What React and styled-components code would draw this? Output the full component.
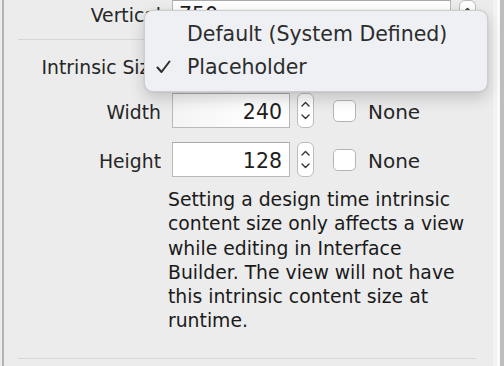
import React from "react";
import styled, { createGlobalStyle } from "styled-components";

const GlobalStyle = createGlobalStyle`
  html, body {
    margin: 0;
    padding: 0;
    background: #ececec;
    overflow: hidden;
  }
  body {
    font-family: "DejaVu Sans", Inter, "Liberation Sans", sans-serif;
    -webkit-font-smoothing: antialiased;
  }
`;

const Window = styled.div`
  position: relative;
  display: flex;
  width: 504px;
  height: 366px;
  overflow: hidden;
  background: #ececec;
`;

const Panel = styled.div`
  flex: 1;
  margin-left: 2px;
  border-left: 2px solid #b2b2b2;
  display: flex;
  flex-direction: column;
`;

const ScrollEdge = styled.div`
  width: 11px;
  display: flex;
`;

const Strip = styled.div`
  width: ${({ $w }) => $w}px;
  background: ${({ $c }) => $c};
`;

const Row = styled.div`
  display: grid;
  grid-template-columns: 157px 1fr;
  column-gap: 11px;
  align-items: center;
  height: ${({ $h }) => $h}px;
  margin-top: ${({ $mt }) => $mt || 0}px;
`;

const Label = styled.div`
  text-align: right;
  font-size: 18.8px;
  color: #262626;
  white-space: nowrap;
  overflow: hidden;
  padding-top: ${({ $drop }) => $drop || 0}px;
`;

const Controls = styled.div`
  display: flex;
  align-items: center;
  height: 100%;
`;

const Separator = styled.div`
  height: 1px;
  background: #d6d6d6;
  margin: ${({ $m }) => $m};
`;

const Field = styled.div`
  box-sizing: border-box;
  width: ${({ $w }) => $w}px;
  height: 35px;
  border: 1px solid #b9b9b9;
  border-top-color: #a9a9a9;
  background: ${({ $shade }) =>
    $shade ? "linear-gradient(90deg, #f4f4f4, #fdfdfd 60%)" : "#ffffff"};
  display: flex;
  align-items: center;
  justify-content: ${({ $left }) => ($left ? "flex-start" : "flex-end")};
  padding: 3px 7px 0;
  font-size: 20.5px;
  color: #1e1e1e;
`;

const ComboField = styled(Field)`
  height: 30px;
  justify-content: space-between;
  padding: 0 10px 0 6px;
`;

const ComboArrow = styled.span`
  width: 0;
  height: 0;
  border-left: 6px solid transparent;
  border-right: 6px solid transparent;
  border-top: 7px solid #555;
`;

const Stepper = styled.div`
  box-sizing: border-box;
  width: 17px;
  height: ${({ $h }) => $h || 35}px;
  margin-left: ${({ $ml }) => $ml}px;
  border: 1px solid #bcbcbc;
  border-radius: 6px;
  background: #fff;
  display: flex;
  flex-direction: column;
  align-items: center;
  justify-content: space-around;
  padding: 3px 0;
`;

const Checkbox = styled.div`
  box-sizing: border-box;
  width: 23px;
  height: 22px;
  margin-left: 19px;
  margin-top: 1px;
  border: 1px solid #b4b4b4;
  border-radius: 5px;
  background: #fff;
`;

const CheckLabel = styled.span`
  margin-left: 12px;
  padding-top: 3px;
  font-size: 20px;
  color: #262626;
`;

const DescRow = styled.div`
  padding-left: 164px;
  margin-top: 11px;
`;

const Description = styled.p`
  margin: 0;
  width: 300px;
  font-size: 18.8px;
  line-height: 24.3px;
  color: #1a1a1a;
`;

const Menu = styled.div`
  position: absolute;
  left: 144px;
  top: 10px;
  width: 344px;
  box-sizing: border-box;
  padding: 6px 0 8px;
  background: #eef0f3;
  border: 1px solid rgba(0, 0, 0, 0.14);
  border-radius: 9px;
  box-shadow: 0 6px 16px rgba(0, 0, 0, 0.18), 0 0 2px rgba(0, 0, 0, 0.12);
`;

const MenuItem = styled.div`
  position: relative;
  height: 33px;
  display: flex;
  align-items: center;
  padding-left: 42px;
  font-size: 20.5px;
  color: #2c2c2c;
  white-space: nowrap;
`;

const Check = styled.svg`
  position: absolute;
  left: 11px;
  top: 10px;
`;

const Chevron = ({ up }) => (
  <svg width="9" height="6" viewBox="0 0 9 6">
    <path
      d={up ? "M1 5 L4.5 1.5 L8 5" : "M1 1 L4.5 4.5 L8 1"}
      fill="none"
      stroke="#333"
      strokeWidth="1.4"
      strokeLinecap="round"
      strokeLinejoin="round"
    />
  </svg>
);

const SizeRow = ({ label, value, mt, shade }) => (
  <Row $h={35} $mt={mt}>
    <Label $drop={3}>{label}</Label>
    <Controls>
      <Field $w={118} $shade={shade}>
        {value}
      </Field>
      <Stepper $ml={7}>
        <Chevron up />
        <Chevron />
      </Stepper>
      <Checkbox />
      <CheckLabel>None</CheckLabel>
    </Controls>
  </Row>
);

export default function App() {
  return (
    <>
      <GlobalStyle />
      <Window>
        <Panel>
          <Row $h={22}>
            <Label>Vertical</Label>
            <Controls>
              <ComboField $w={279} $left>
                750
                <ComboArrow />
              </ComboField>
              <Stepper $ml={8} $h={30}>
                <Chevron up />
                <Chevron />
              </Stepper>
            </Controls>
          </Row>
          <Separator $m="17px 17px 0 14px" />
          <Row $h={30} $mt={12}>
            <Label>Intrinsic Size</Label>
            <Controls />
          </Row>
          <SizeRow label="Width" value="240" mt={11} shade />
          <SizeRow label="Height" value="128" mt={14} />
          <DescRow>
            <Description>
              Setting a design time intrinsic content size only affects a view
              while editing in Interface Builder. The view will not have this
              intrinsic content size at runtime.
            </Description>
          </DescRow>
          <Separator $m="24px 17px 0 14px" />
        </Panel>
        <ScrollEdge>
          <Strip $w={4} $c="#f3f3f3" />
          <Strip $w={3} $c="#fbfbfb" />
          <Strip $w={4} $c="#bebebe" />
        </ScrollEdge>
        <Menu>
          <MenuItem>Default (System Defined)</MenuItem>
          <MenuItem>
            <Check width="15" height="14" viewBox="0 0 15 14">
              <path
                d="M1.5 7.5 L5.5 12 L13.5 1.5"
                fill="none"
                stroke="#2c2c2c"
                strokeWidth="2"
                strokeLinecap="round"
                strokeLinejoin="round"
              />
            </Check>
            Placeholder
          </MenuItem>
        </Menu>
      </Window>
    </>
  );
}
